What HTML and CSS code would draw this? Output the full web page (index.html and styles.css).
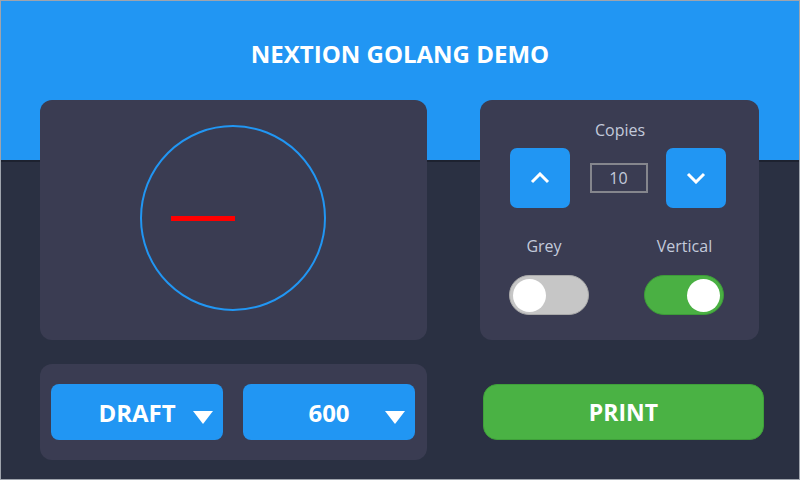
FILE: index.html
```html
<!DOCTYPE html>
<html>
<head>
<meta charset="utf-8">
<link rel="stylesheet" href="styles.css">
</head>
<body>
<div class="screen">
  <header class="title">NEXTION GOLANG DEMO</header>
  <main class="grid">
    <section class="card gauge">
      <svg width="387" height="240" viewBox="0 0 387 240">
        <circle cx="193" cy="118" r="92" fill="none" stroke="#2196f3" stroke-width="2"/>
        <line x1="131" y1="118.5" x2="195" y2="118.5" stroke="#ff0000" stroke-width="5"/>
      </svg>
    </section>
    <section class="card controls">
      <div class="label copies">Copies</div>
      <div class="stepper">
        <button class="sqbtn" aria-label="up">
          <svg width="20" height="12" viewBox="0 0 20 12"><path d="M2 10 L10 2 L18 10" fill="none" stroke="#fff" stroke-width="3"/></svg>
        </button>
        <div class="count">10</div>
        <button class="sqbtn" aria-label="down">
          <svg width="20" height="12" viewBox="0 0 20 12"><path d="M2 2 L10 10 L18 2" fill="none" stroke="#fff" stroke-width="3"/></svg>
        </button>
      </div>
      <div class="switches">
        <div class="label grey">Grey</div>
        <div class="label">Vertical</div>
        <div class="toggle off"><span class="knob"></span></div>
        <div class="toggle on"><span class="knob"></span></div>
      </div>
    </section>
    <section class="card selects">
      <div class="select"><span></span><span class="val">DRAFT</span><span class="tri"></span></div>
      <div class="select"><span></span><span class="val">600</span><span class="tri"></span></div>
    </section>
    <div class="printcell">
      <button class="print">PRINT</button>
    </div>
  </main>
</div>
</body>
</html>
```
FILE: styles.css
```css
* { box-sizing: border-box; }
html, body { margin: 0; padding: 0; }
body { font-family: "Open Sans", "Noto Sans", sans-serif; }

.screen {
  width: 800px;
  height: 480px;
  border: 1px solid #9fa4ad;
  background: linear-gradient(#2196f3 0, #2196f3 159px, #1d2230 159px, #1d2230 161px, #2a3042 161px);
  display: flex;
  flex-direction: column;
}

.title {
  height: 99px;
  display: flex;
  align-items: center;
  justify-content: center;
  padding-top: 6px;
  color: #fff;
  font-weight: 700;
  font-size: 24px;
  letter-spacing: 0;
}

.grid {
  display: grid;
  grid-template-columns: 387px 279px;
  grid-template-rows: 240px 96px;
  column-gap: 53px;
  row-gap: 24px;
  padding-left: 39px;
}

.card {
  background: #3a3c52;
  border-radius: 12px;
}

.gauge { display: flex; }
.gauge svg { display: block; }

.controls {
  display: flex;
  flex-direction: column;
  align-items: stretch;
  padding: 19px 33px 0 30px;
}

.label {
  color: #c3cadb;
  font-size: 16px;
  text-align: center;
  line-height: 22px;
}

.copies { padding-left: 4px; }

.stepper {
  margin-top: 7px;
  display: flex;
  align-items: center;
  justify-content: space-between;
}

.sqbtn {
  width: 60px;
  height: 60px;
  border: none;
  border-radius: 7px;
  background: #2196f3;
  display: flex;
  align-items: center;
  justify-content: center;
  padding: 0;
}
.sqbtn svg { display: block; }

.count {
  width: 58px;
  height: 30px;
  border: 2px solid #85868d;
  color: #c3cadb;
  font-size: 16px;
  display: flex;
  align-items: center;
  justify-content: center;
  margin-left: 1px;
}

.switches {
  margin-top: 27px;
  display: grid;
  grid-template-columns: 80px 81px;
  column-gap: 55px;
  row-gap: 18px;
  margin-left: -1px;
  margin-right: -2px;
}

.grey { margin-right: 10px; }

.toggle {
  width: 80px;
  height: 40px;
  border-radius: 20px;
  display: flex;
  align-items: center;
  padding: 0 3px;
}
.toggle.off { background: #c6c6c6; border: 1px solid #a9a9a9; justify-content: flex-start; }
.toggle.on { background: #4ab043; border: 1px solid #3c9c38; justify-content: flex-end; }
.knob {
  width: 33px;
  height: 33px;
  border-radius: 50%;
  background: #fff;
}

.selects {
  display: flex;
  align-items: center;
  gap: 20px;
  padding: 0 11px;
}

.select {
  width: 172px;
  height: 56px;
  border-radius: 8px;
  background: #2196f3;
  display: grid;
  grid-template-columns: 1fr auto 1fr;
  align-items: center;
  color: #fff;
  font-weight: 700;
  font-size: 24px;
  padding: 0 10px;
}

.tri {
  justify-self: end;
  margin-top: 10px;
  width: 0;
  height: 0;
  border-left: 10px solid transparent;
  border-right: 10px solid transparent;
  border-top: 13px solid #fff;
}

.printcell {
  display: flex;
  align-items: center;
  margin-left: 3px;
  margin-right: -5px;
  padding-bottom: 1px;
}

.print {
  width: 100%;
  height: 56px;
  border: 1px solid #3fa03a;
  border-radius: 14px;
  background: #4ab244;
  color: #fff;
  font-family: "Open Sans", "Noto Sans", sans-serif;
  font-weight: 700;
  font-size: 23px;
  padding: 0;
}
```
